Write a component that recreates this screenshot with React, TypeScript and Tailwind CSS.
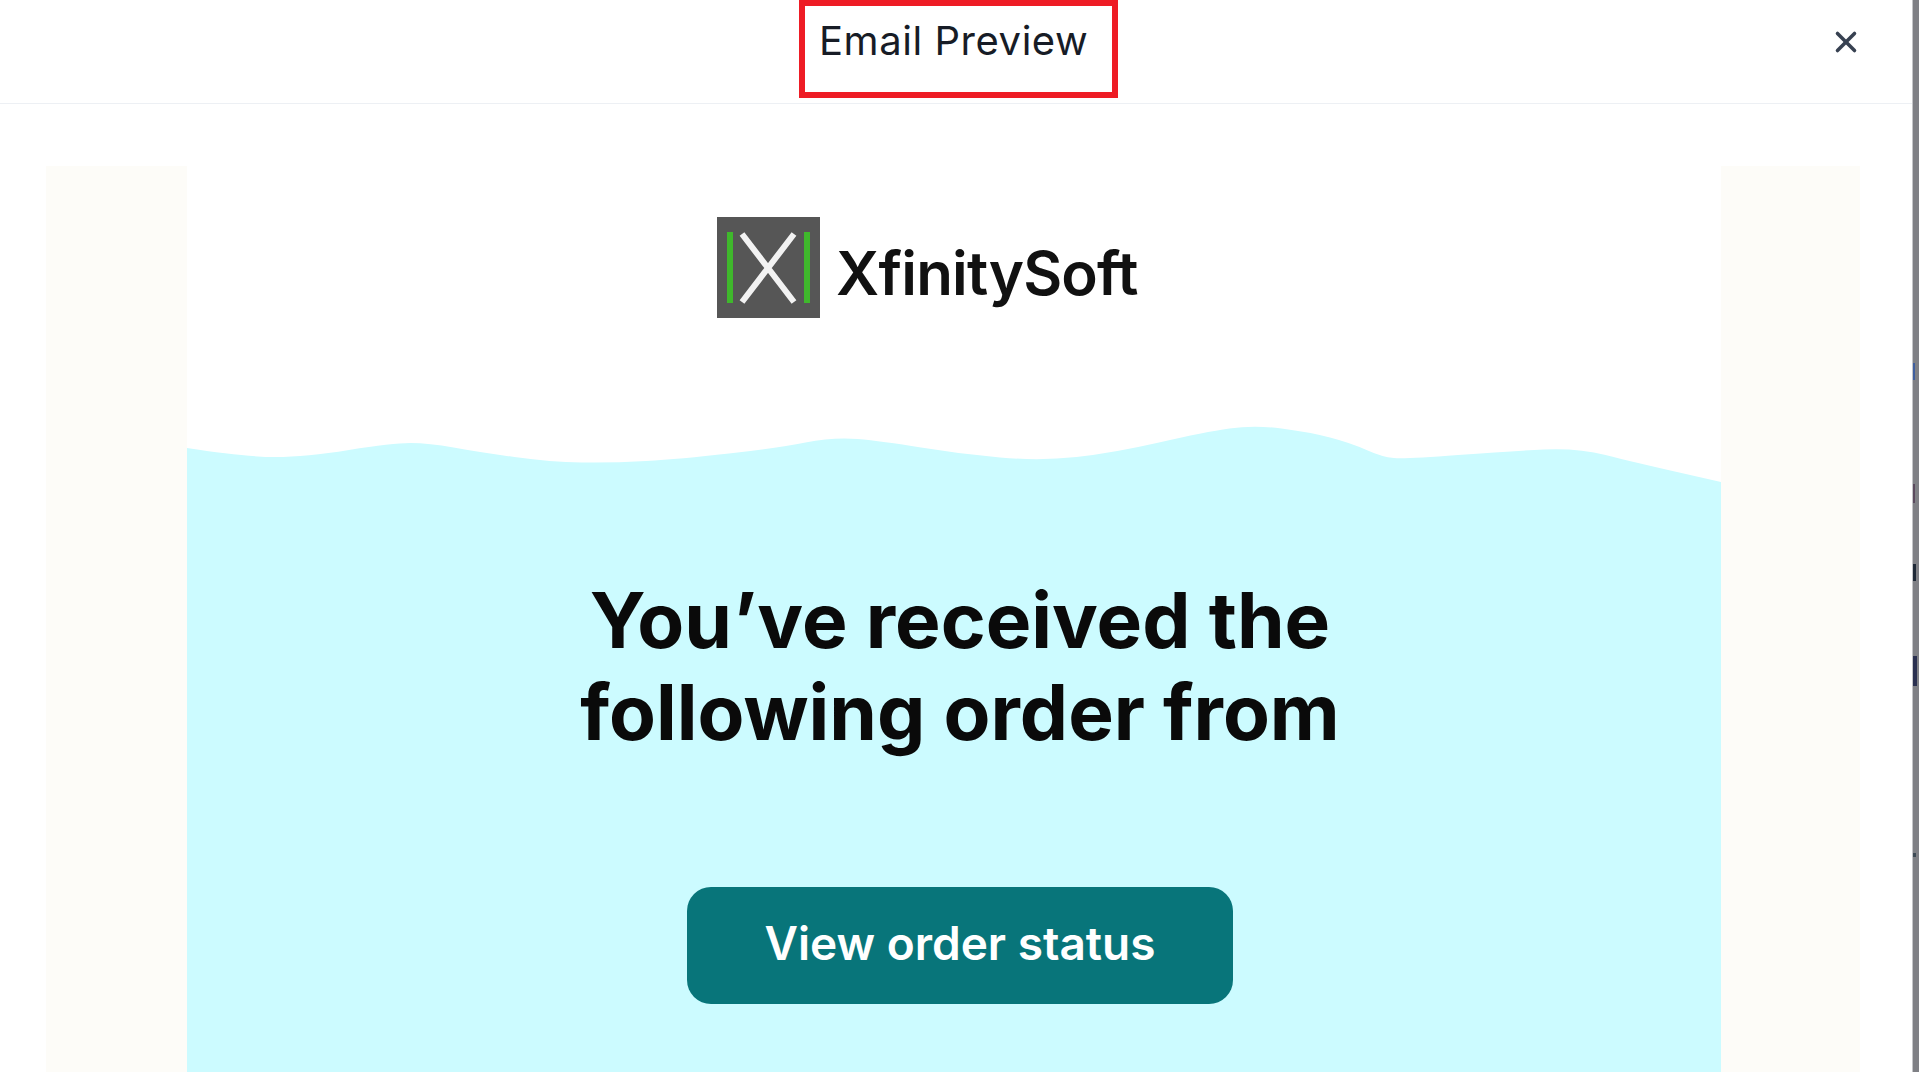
import { X } from 'lucide-react'

// wave outline, measured along the top of the cyan block
const wavePoints = [
  [0, 28], [58, 37], [119, 37], [205, 23], [242, 23], [291, 32], [364, 42], [425, 43], [493, 39],
  [591, 28], [646, 17], [695, 21], [773, 34], [853, 41], [926, 33], [1018, 12], [1067, 5],
  [1122, 12], [1164, 23], [1195, 37], [1219, 39], [1323, 31], [1391, 28], [1446, 42], [1534, 62],
]

function wavePath() {
  let d = `M0 70 L${wavePoints[0][0]} ${wavePoints[0][1]}`
  for (let i = 1; i < wavePoints.length - 1; i++) {
    const [x, y] = wavePoints[i]
    const [nx, ny] = wavePoints[i + 1]
    d += ` Q${x} ${y} ${(x + nx) / 2} ${(y + ny) / 2}`
  }
  const last = wavePoints[wavePoints.length - 1]
  return `${d} L${last[0]} ${last[1]} L1534 70 Z`
}

function LogoMark() {
  return (
    <svg width="103" height="101" viewBox="0 0 103 101" className="shrink-0">
      <rect width="103" height="101" fill="#565656" />
      <rect x="10" y="15" width="6" height="71" fill="#3fb82c" />
      <rect x="87" y="15" width="6" height="71" fill="#3fb82c" />
      <path d="M25 17 L77 85 M77 17 L25 85" stroke="#f2f2f2" strokeWidth="6" />
    </svg>
  )
}

export default function App() {
  return (
    <div className="flex h-[1072px] w-full overflow-hidden bg-white font-['Inter',sans-serif]">
      <div className="flex min-w-0 flex-1 flex-col">
        <header className="flex h-[104px] shrink-0 items-start border-b border-[#edf0f4]">
          <div className="ml-[799px] flex h-[98px] w-[319px] border-[6px] border-[#ee1c25] pl-[14px] pt-[11px]">
            <h2 className="text-[40px] leading-[48px] tracking-[0.55px] text-[#171c26]">Email Preview</h2>
          </div>
          <button className="ml-[711px] mt-[25px] text-[#374151]">
            <X size={34} strokeWidth={2.5} />
          </button>
        </header>

        <div className="flex flex-1 pl-[46px] pr-[52px] pt-[62px]">
          <div className="w-[141px] shrink-0 bg-[#fdfcf8]" />

          <div className="flex min-w-0 flex-1 flex-col bg-white">
            <div className="flex h-[254px] shrink-0 items-start gap-[16px] pl-[530px] pt-[51px]">
              <LogoMark />
              <span className="mt-[20px] text-[60px] font-semibold leading-[72px] tracking-[-0.8px] text-[#111111]">
                XfinitySoft
              </span>
            </div>
            <svg viewBox="0 0 1534 70" className="block h-[70px] w-full shrink-0" preserveAspectRatio="none">
              <path d={wavePath()} fill="#ccfbff" />
            </svg>
            <div className="flex flex-1 flex-col items-center bg-[#ccfbff] pl-[12px] pt-[84px]">
              <h1 className="text-center text-[76.6px] font-bold leading-[92px] text-[#0a0a0a]">
                You’ve received the
                <br />
                following order from
              </h1>
              <button className="mt-[129px] flex h-[117px] w-[546px] items-center justify-center rounded-[24px] bg-[#08757a] pb-[4px] text-[46px] font-semibold text-white">
                View order status
              </button>
            </div>
          </div>

          <div className="w-[139px] shrink-0 bg-[#fdfcf8]" />
        </div>
      </div>

      <div className="relative w-[7px] shrink-0 border-l border-[#c4c5c8] bg-[#7f8085]">
        <span className="absolute left-0 top-[363px] h-[17px] w-[2px] bg-[#3f5f9f]" />
        <span className="absolute left-0 top-[484px] h-[19px] w-[2px] bg-[#5b4a5e]" />
        <span className="absolute left-0 top-[564px] h-[17px] w-[3px] bg-[#1f2937]" />
        <span className="absolute left-0 top-[656px] h-[30px] w-[4px] bg-[#2a3050]" />
        <span className="absolute left-0 top-[853px] h-[4px] w-[3px] bg-[#3d4a55]" />
      </div>
    </div>
  )
}
